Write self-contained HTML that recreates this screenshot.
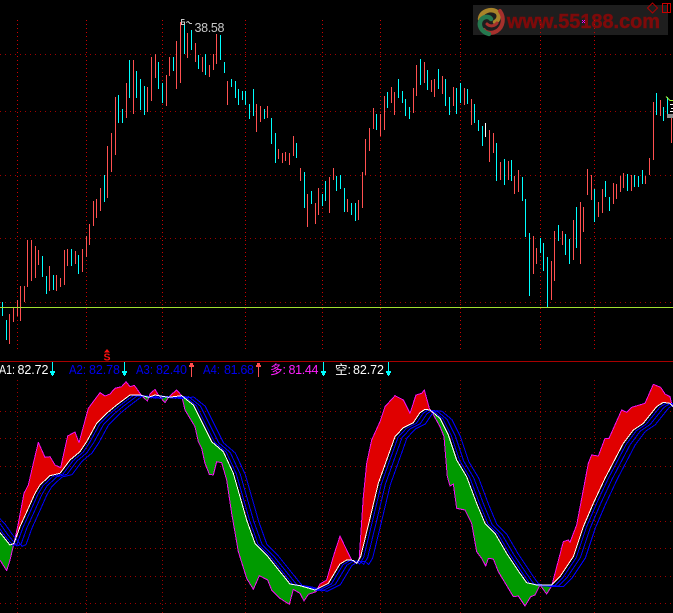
<!DOCTYPE html>
<html>
<head>
<meta charset="utf-8">
<style>
html,body{margin:0;padding:0;background:#000;width:673px;height:613px;overflow:hidden}
svg{display:block;overflow:hidden}
text{font-family:"Liberation Sans","Noto Sans CJK SC",sans-serif}
</style>
</head>
<body>
<svg width="673" height="613" viewBox="0 0 673 613" xmlns="http://www.w3.org/2000/svg">
<rect width="673" height="613" fill="#000"/>

<!-- logo plate -->
<rect x="473" y="5" width="195" height="30" fill="#1e1e1e"/>
<g fill="none" stroke-linecap="round">
<path d="M480 19C481 11 491 8 497 12C500 15 499 20 495 22" stroke="#a8842a" stroke-width="4.5"/>
<path d="M500 11C505 18 503 27 497 31C492 34 486 33 484 30" stroke="#a5302c" stroke-width="4"/>
<path d="M489 34C481 32 478 25 481 20C484 16 489 16 491 19" stroke="#25794f" stroke-width="4.5"/>
<path d="M487 24C490 27 495 26 497 23" stroke="#a5302c" stroke-width="3"/>
</g>
<text x="507" y="28" font-size="20" font-weight="700" fill="#7d0a0a" stroke="#7d0a0a" stroke-width=".5" textLength="153" lengthAdjust="spacingAndGlyphs">www.55188.com</text>
<path d="M582 20h1v1h-1zM584 20h1v1h-1zM583 21h1v1h-1zM582 22h1v1h-1zM584 22h1v1h-1z" fill="#f0f"/>
<path d="M652.500 3L657.500 8L652.500 13L647.500 8Z" fill="none" stroke="#b00000"/>
<path d="M662.500 3.500H670.500V12.500H662.500ZM667.500 3.500V12.500" fill="none" stroke="#c80000"/>

<!-- top grid -->
<g fill="none" shape-rendering="crispEdges">
<path d="M0 54.500H673M0 111.500H673M0 175.500H673M0 238.500H673M0 302.500H673" stroke="#a00000" stroke-dasharray="1 4"/>
<path d="M17.500 20V349M86.500 20V349M162.500 20V349M245.500 20V349M322.500 20V349M380.500 20V349M460.500 20V349M540.500 20V349M594.500 20V349" stroke="#d00000" stroke-dasharray="1 3"/>
</g>

<!-- bars -->
<path shape-rendering="crispEdges" fill="none" stroke="#ff5050" d="M9.500 314V344M13.500 308V322M17.500 300V316M20.500 286V321M24.500 286V302M27.500 240V287M31.500 240V281M35.500 246V278M38.500 250V265M49.500 266V291M56.500 275V291M60.500 278V287M64.500 250V285M67.500 249V266M75.500 251V264M82.500 249V272M86.500 236V257M89.500 224V245M93.500 201V226M96.500 199V218M100.500 188V211M107.500 146V198M111.500 133V172M115.500 97V155M126.500 83V118M133.500 60V114M147.500 87V112M151.500 57V101M155.500 54V78M166.500 75V106M169.500 57V76M176.500 41V89M180.500 22V83M187.500 33V58M195.500 43V62M202.500 57V72M209.500 65V77M213.500 54V70M216.500 34V64M227.500 81V105M256.500 104V132M260.500 106V122M267.500 106V118M278.500 149V159M282.500 153V163M285.500 152V161M289.500 153V165M293.500 136V156M300.500 168V181M307.500 194V227M315.500 203V224M318.500 188V215M329.500 177V213M333.500 168V180M347.500 199V212M358.500 200V220M362.500 172V208M365.500 139V175M369.500 128V151M373.500 108V129M380.500 114V136M384.500 96V130M391.500 87V103M394.500 92V115M413.500 88V113M416.500 65V96M424.500 62V83M431.500 80V92M434.500 79V97M442.500 76V94M453.500 87V106M464.500 88V105M471.500 99V125M489.500 130V162M493.500 133V153M500.500 162V180M508.500 161V180M514.500 176V194M518.500 170V192M533.500 236V274M536.500 248V264M551.500 261V300M554.500 231V281M562.500 231V245M573.500 220V260M580.500 202V264M583.500 207V232M587.500 169V195M591.500 175V200M598.500 202V217M602.500 189V213M613.500 183V204M616.500 184V199M620.500 176V192M623.500 173V188M631.500 175V191M645.500 176V184M649.500 158V175M653.500 102V160M660.500 100V116M671.500 118V143"/>
<path shape-rendering="crispEdges" fill="none" stroke="#00ffff" d="M2.500 302V316M6.500 320V340M42.500 256V277M46.500 276V294M53.500 275V290M71.500 249V266M78.500 255V274M104.500 175V202M118.500 95V123M122.500 109V123M129.500 60V98M136.500 71V98M140.500 79V110M144.500 86V115M158.500 62V89M162.500 83V103M173.500 57V71M184.500 23V54M191.500 30V50M198.500 55V69M205.500 54V75M220.500 35V60M224.500 62V73M231.500 79V87M235.500 81V98M238.500 89V105M242.500 91V100M245.500 91V105M249.500 104V119M253.500 89V116M264.500 109V119M271.500 118V144M275.500 133V163M296.500 143V158M304.500 172V208M311.500 191V204M322.500 194V206M325.500 181V201M336.500 176V191M340.500 175V189M344.500 188V212M351.500 203V215M355.500 203V221M376.500 114V130M387.500 92V108M398.500 79V98M402.500 91V103M405.500 99V116M409.500 107V119M420.500 59V85M427.500 70V90M438.500 69V89M445.500 79V106M449.500 97V115M456.500 88V114M460.500 83V103M467.500 89V104M474.500 104V123M478.500 120V131M482.500 126V146M496.500 143V181M504.500 159V185M511.500 160V181M522.500 177V201M525.500 199V237M529.500 233V296M540.500 238V253M543.500 243V271M547.500 257V307M558.500 225V241M565.500 234V255M569.500 239V264M576.500 207V248M594.500 189V222M605.500 181V197M609.500 197V211M627.500 174V191M634.500 175V187M638.500 176V187M642.500 170V184M656.500 93V115M663.500 107V121M667.500 97V115"/>
<path shape-rendering="crispEdges" fill="none" stroke="#fff" d="M485.500 123V137"/>

<!-- right edge marker -->
<rect x="667" y="114" width="6" height="4" fill="#8a8a8a"/>
<path d="M666 96.500L670 100.500H673" fill="none" stroke="#a0f030"/>
<path shape-rendering="crispEdges" d="M670 104h3v1h-3zM671 108h2v1h-2zM670 111h3v1h-3z" fill="#fff"/>

<!-- high label -->
<path d="M184.500 19.500H181.500V24.500H184.500V22H182M186 22.500L188 21.500L190 23.500H192" fill="none" stroke="#c8c8c8" shape-rendering="crispEdges"/>
<text x="194.500" y="32" font-size="12.500" fill="#c8c8c8" textLength="30" lengthAdjust="spacing">38.58</text>

<!-- horizontal price line -->
<rect x="0" y="307" width="673" height="1" fill="#a0e030"/>

<!-- S marker -->
<path d="M107 349L110 352.500H104Z" fill="#ff1010"/>
<text x="107" y="360.500" font-size="10.500" font-weight="700" fill="#ff1010" text-anchor="middle">S</text>

<!-- divider -->
<rect x="0" y="361" width="673" height="1" fill="#a80000"/>

<!-- legend -->
<g font-size="12.500">
<text x="-1" y="374" fill="#fff" textLength="16" lengthAdjust="spacingAndGlyphs">A1:</text><text x="17.500" y="374" fill="#fff" textLength="31" lengthAdjust="spacing">82.72</text>
<text x="69" y="374" fill="#0000f0" textLength="17" lengthAdjust="spacingAndGlyphs">A2:</text><text x="89" y="374" fill="#0000f0" textLength="31" lengthAdjust="spacing">82.78</text>
<text x="136" y="374" fill="#0000f0" textLength="17" lengthAdjust="spacingAndGlyphs">A3:</text><text x="156" y="374" fill="#0000f0" textLength="31" lengthAdjust="spacing">82.40</text>
<text x="203" y="374" fill="#0000f0" textLength="17" lengthAdjust="spacingAndGlyphs">A4:</text><text x="224" y="374" fill="#0000f0" textLength="30" lengthAdjust="spacing">81.68</text>
<text x="270" y="374" fill="#ff20ff">多:</text><text x="288.500" y="374" fill="#ff20ff" textLength="30" lengthAdjust="spacing">81.44</text>
<text x="335" y="374" fill="#fff">空:</text><text x="353" y="374" fill="#fff" textLength="31" lengthAdjust="spacing">82.72</text>
</g>
<g shape-rendering="crispEdges">
<path d="M52 362h1v14h-1zM50 371h5v2h-5zM51 373h3v2h-3z" fill="#00ffff"/>
<path d="M124 362h1v14h-1zM122 371h5v2h-5zM123 373h3v2h-3z" fill="#00ffff"/>
<path d="M323 362h1v14h-1zM321 371h5v2h-5zM322 373h3v2h-3z" fill="#00ffff"/>
<path d="M388 362h1v14h-1zM386 371h5v2h-5zM387 373h3v2h-3z" fill="#00ffff"/>
<path d="M191 363h1v14h-1zM190 363h3v2h-3zM189 365h5v2h-5z" fill="#ff5050"/>
<path d="M258 363h1v14h-1zM257 363h3v2h-3zM256 365h5v2h-5z" fill="#ff5050"/>
</g>

<!-- lower grid -->
<g fill="none" stroke="#a00000" shape-rendering="crispEdges">
<path stroke-dasharray="1 4" d="M0 411.500H673M0 438.500H673M0 466.500H673M0 493.500H673M0 521.500H673M0 548.500H673M0 576.500H673M0 603.500H673"/>
<path stroke-dasharray="1 3" d="M17.500 380V613M86.500 380V613M162.500 380V613M245.500 380V613M322.500 380V613M380.500 380V613M460.500 380V613M540.500 380V613M594.500 380V613"/>
</g>

<defs>
<clipPath id="aboveW"><path d="M0 0L0 458 30 495 42 490 60 440 85 385 105 340 120 315 150 287 180 280 210 240 240 215 260 185 290 130 320 100 350 75 390 45 420 45 445 52 465 45 505 52 545 47 580 75 605 125 635 185 670 215 700 280 740 420 765 490 800 525 840 575 870 612 900 617 945 630 985 610 1020 552 1040 540 1060 541 1070 550 1082 530 1110 415 1135 310 1160 240 1185 170 1210 143 1240 128 1260 98 1275 88 1290 90 1320 115 1345 165 1370 240 1400 290 1430 370 1455 430 1485 460 1520 520 1560 580 1580 608 1610 615 1655 615 1680 590 1720 530 1750 440 1780 370 1815 295 1870 190 1900 150 1930 130 1970 80 1990 67 2010 70 2019 80 2019 0Z"/></clipPath>
<clipPath id="belowW"><path d="M0 699L0 458 30 495 42 490 60 440 85 385 105 340 120 315 150 287 180 280 210 240 240 215 260 185 290 130 320 100 350 75 390 45 420 45 445 52 465 45 505 52 545 47 580 75 605 125 635 185 670 215 700 280 740 420 765 490 800 525 840 575 870 612 900 617 945 630 985 610 1020 552 1040 540 1060 541 1070 550 1082 530 1110 415 1135 310 1160 240 1185 170 1210 143 1240 128 1260 98 1275 88 1290 90 1320 115 1345 165 1370 240 1400 290 1430 370 1455 430 1485 460 1520 520 1560 580 1580 608 1610 615 1655 615 1680 590 1720 530 1750 440 1780 370 1815 295 1870 190 1900 150 1930 130 1970 80 1990 67 2010 70 2019 80 2019 699Z"/></clipPath>
<path id="wl" d="M-36 412L-21 428 -9 445 0 458 30 495 42 490 60 440 85 385 105 340 120 315 150 287 180 280 210 240 240 215 260 185 290 130 320 100 350 75 390 45 420 45 445 52 465 45 505 52 545 47 580 75 605 125 635 185 670 215 700 280 740 420 765 490 800 525 840 575 870 612 900 617 945 630 985 610 1020 552 1040 540 1060 541 1070 550 1082 530 1110 415 1135 310 1160 240 1185 170 1210 143 1240 128 1260 98 1275 88 1290 90 1320 115 1345 165 1370 240 1400 290 1430 370 1455 430 1485 460 1520 520 1560 580 1580 608 1610 615 1655 615 1680 590 1720 530 1750 440 1780 370 1815 295 1870 190 1900 150 1930 130 1970 80 1990 67 2010 70 2019 80"/>
</defs>

<!-- lower chart: coordinates are 3x, y origin 380 -->
<g transform="translate(0,380) scale(.33333)" fill="none" stroke-width="3" stroke-linejoin="round">
<g clip-path="url(#aboveW)">
<path stroke="none" fill="#e00000" d="M0 699L0 540 20 572 30 540 42 490 55 430 72 340 85 315 100 250 115 187 135 232 150 230 165 255 182 263 203 168 225 156 237 188 265 85 300 38 315 48 330 42 345 25 365 20 378 5 390 20 403 16 425 47 442 63 450 42 465 28 475 45 495 68 507 50 530 30 545 47 555 90 570 115 585 140 595 185 605 205 615 250 628 283 640 285 650 245 665 248 680 300 695 400 715 515 740 595 760 628 778 587 803 600 815 630 840 655 868 673 880 628 900 640 912 663 925 643 948 635 960 612 980 600 1000 530 1020 468 1040 510 1055 540 1070 550 1077 545 1090 350 1100 250 1115 180 1140 125 1155 80 1185 47 1210 60 1230 100 1248 45 1265 40 1273 30 1288 85 1295 95 1320 140 1332 170 1342 290 1350 318 1360 312 1370 385 1395 390 1415 430 1430 515 1445 535 1457 558 1465 535 1480 537 1495 575 1510 600 1540 650 1555 648 1575 678 1592 650 1605 645 1620 615 1640 642 1655 618 1690 485 1705 480 1710 487 1730 435 1765 250 1775 225 1795 228 1815 175 1827 175 1865 90 1880 97 1895 82 1935 70 1960 13 1982 22 1995 42 2010 50 2017 80 2019 80 2019 699Z"/>
</g>
<g clip-path="url(#belowW)">
<path stroke="none" fill="#009a00" d="M0 0L0 540 20 572 30 540 42 490 55 430 72 340 85 315 100 250 115 187 135 232 150 230 165 255 182 263 203 168 225 156 237 188 265 85 300 38 315 48 330 42 345 25 365 20 378 5 390 20 403 16 425 47 442 63 450 42 465 28 475 45 495 68 507 50 530 30 545 47 555 90 570 115 585 140 595 185 605 205 615 250 628 283 640 285 650 245 665 248 680 300 695 400 715 515 740 595 760 628 778 587 803 600 815 630 840 655 868 673 880 628 900 640 912 663 925 643 948 635 960 612 980 600 1000 530 1020 468 1040 510 1055 540 1070 550 1077 545 1090 350 1100 250 1115 180 1140 125 1155 80 1185 47 1210 60 1230 100 1248 45 1265 40 1273 30 1288 85 1295 95 1320 140 1332 170 1342 290 1350 318 1360 312 1370 385 1395 390 1415 430 1430 515 1445 535 1457 558 1465 535 1480 537 1495 575 1510 600 1540 650 1555 648 1575 678 1592 650 1605 645 1620 615 1640 642 1655 618 1690 485 1705 480 1710 487 1730 435 1765 250 1775 225 1795 228 1815 175 1827 175 1865 90 1880 97 1895 82 1935 70 1960 13 1982 22 1995 42 2010 50 2017 80 2019 80 2019 0Z"/>
</g>
<g shape-rendering="crispEdges">
<path stroke="#f010f0" d="M0 540L20 572 30 540 42 490 55 430 72 340 85 315 100 250 115 187 135 232 150 230 165 255 182 263 203 168 225 156 237 188 265 85 300 38 315 48 330 42 345 25 365 20 378 5 390 20 403 16 425 47 442 63 450 42 465 28 475 45 495 68 507 50 530 30 545 47 555 90 570 115 585 140 595 185 605 205 615 250 628 283 640 285 650 245 665 248 680 300 695 400 715 515 740 595 760 628 778 587 803 600 815 630 840 655 868 673 880 628 900 640 912 663 925 643 948 635 960 612 980 600 1000 530 1020 468 1040 510 1055 540 1070 550 1077 545 1090 350 1100 250 1115 180 1140 125 1155 80 1185 47 1210 60 1230 100 1248 45 1265 40 1273 30 1288 85 1295 95 1320 140 1332 170 1342 290 1350 318 1360 312 1370 385 1395 390 1415 430 1430 515 1445 535 1457 558 1465 535 1480 537 1495 575 1510 600 1540 650 1555 648 1575 678 1592 650 1605 645 1620 615 1640 642 1655 618 1690 485 1705 480 1710 487 1730 435 1765 250 1775 225 1795 228 1815 175 1827 175 1865 90 1880 97 1895 82 1935 70 1960 13 1982 22 1995 42 2010 50 2017 80"/>
<use href="#wl" x="36" y="4" stroke="#0000ff"/>
<use href="#wl" x="21" y="3" stroke="#0000ff"/>
<use href="#wl" x="9" y="2" stroke="#0000ff"/>
<use href="#wl" stroke="#ffffff"/>
</g>
</g>
</svg>
</body>
</html>
